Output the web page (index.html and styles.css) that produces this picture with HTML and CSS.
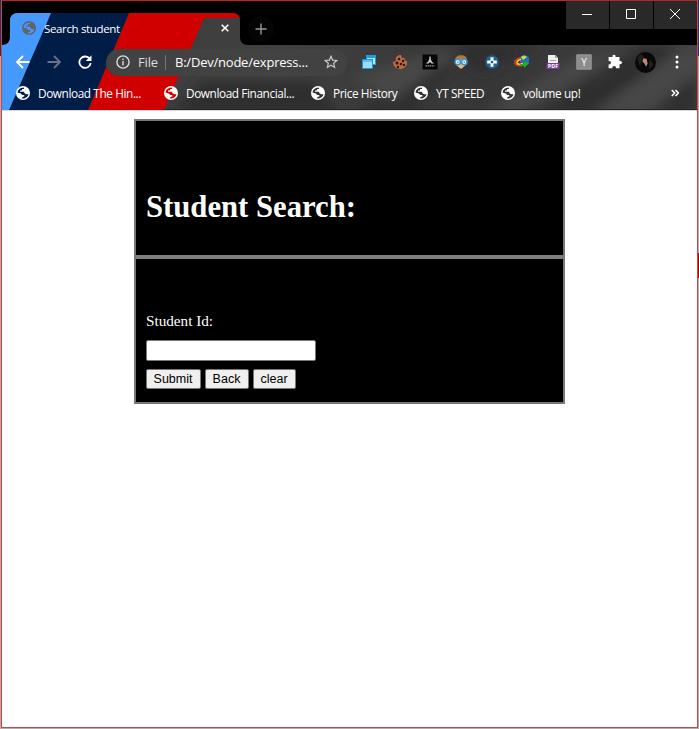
FILE: index.html
```html
<!DOCTYPE html>
<html lang="en">
<head>
<meta charset="utf-8">
<title>Search student</title>
<link rel="stylesheet" href="styles.css">
</head>
<body>
<svg class="defs" width="0" height="0" aria-hidden="true">
  <symbol id="globe" viewBox="0 0 14 14">
    <circle cx="7" cy="7" r="7" fill="currentColor"/>
    <path class="land" d="M7.7 1.5L8.2 3H6.2L5.8 4.5H4V5.8H7.8L8.8 7.6L10.6 8.2H12.5Q11.7 11.5 8 12.4L6.2 12.5V11.2L8.6 10.3L8.1 9H6.3L4.8 7.5L1.5 6.5Q2 2 7.7 1.5Z"/>
  </symbol>
</svg>
<div class="window">
  <header class="chrome">
    <svg class="theme" viewBox="0 0 695 109" width="695" height="109" aria-hidden="true">
      <defs>
        <clipPath id="frame"><path d="M0 44C5 44 8 41 8 36V20Q8 12 16 12H230Q238 12 238 20V36C238 41 241 44 246 44H695V109H0Z"/></clipPath>
        <linearGradient id="metal" x1="0" y1="0" x2="1" y2="0"><stop offset="0" stop-color="#3b3b3b"/><stop offset=".4" stop-color="#404040"/><stop offset=".7" stop-color="#363636"/><stop offset="1" stop-color="#424242"/></linearGradient>
        <filter id="soft"><feGaussianBlur stdDeviation="6"/></filter>
      </defs>
      <g clip-path="url(#frame)">
        <path fill="url(#metal)" d="M0 0H695V109H0Z"/>
        <g filter="url(#soft)">
          <path fill="#2e2e2e" d="M200 80H310L340 112H170ZM350 112L430 60H455L410 112ZM535 112L640 44H680L590 112ZM440 44H540L480 72ZM650 112L695 75V112Z"/>
          <path fill="#474747" d="M480 112L580 55H620L515 112ZM590 112L680 50H695V70L640 112ZM350 75L440 50H460L390 100Z"/>
        </g>
        <path fill="#d00000" d="M127 12H240V17H202L162 109H86Z"/>
        <path fill="#001d48" d="M49 12H127L86 109H7Z"/>
        <path fill="#4599ff" d="M0 12H49L7 109H0Z"/>
        <path fill="#242424" d="M162 108H695V109H162Z"/>
      </g>
    </svg>
    <div class="titlebar">
      <div class="tab">
        <svg class="globe dim"><use href="#globe"/></svg>
        <span class="tab-title">Search student</span>
        <svg class="tab-close" viewBox="0 0 8 8"><path d="M.7.7L7.3 7.3M7.3.7L.7 7.3"/></svg>
      </div>
      <div class="new-tab"><svg viewBox="0 0 12 12"><path d="M6 .5V11.5M.5 6H11.5"/></svg></div>
      <div class="controls">
        <div class="control"><svg viewBox="0 0 12 12"><path d="M1 6.5H11"/></svg></div>
        <div class="control"><svg viewBox="0 0 12 12"><path d="M1.5 1.5H10.5V10.5H1.5Z"/></svg></div>
        <div class="control"><svg viewBox="0 0 12 12"><path d="M1 1L11 11M11 1L1 11"/></svg></div>
      </div>
    </div>
    <div class="toolbar">
      <svg class="nav" viewBox="0 0 14 14"><path d="M13.5 7H1.5M7 1L1 7L7 13"/></svg>
      <svg class="nav faded" viewBox="0 0 14 14"><path d="M.5 7H12.5M7 1L13 7L7 13"/></svg>
      <svg class="nav" viewBox="0 0 14 14"><path d="M11.8 4A5.7 5.7 0 1 0 12.7 8.2"/><path class="solid" d="M13.5.3V6H7.8Z"/></svg>
      <div class="address">
        <svg class="info" viewBox="0 0 14 14"><circle cx="7" cy="7" r="6.1"/><path d="M7 6V10.5M7 3.4V4.9"/></svg>
        <span class="scheme">File</span>
        <span class="divider"></span>
        <span class="url">B:/Dev/node/express...</span>
        <svg class="star" viewBox="0 0 14 14"><path d="M7 1.3L8.6 5.1L12.8 5.5L9.7 8.3L10.6 12.4L7 10.3L3.4 12.4L4.3 8.3L1.2 5.5L5.4 5.1Z"/></svg>
      </div>
      <div class="extensions">
        <svg viewBox="0 0 16 16"><path fill="#1b9ce6" d="M5 1H15V11H5Z"/><path fill="#b8e6fc" d="M6 4H14V10H6Z"/><path fill="#1595df" d="M1 5H12V15H1Z"/><path fill="#9ddcfa" d="M2 8H11V14H2Z"/><path fill="#5cc0f5" d="M2 6H11V8H2Z"/></svg>
        <svg viewBox="0 0 16 16"><path fill="#b96b43" d="M9 1L10 4L13 4L12 6L15 7C16 12 12 15 8 15C4 15 1 12 1 8C2 7 4 8 4 6C3 3 6 1 9 1Z"/><g fill="#30150d"><circle cx="7" cy="5" r="1.3"/><circle cx="11" cy="7" r="1.2"/><circle cx="5" cy="9" r="1.5"/><circle cx="9" cy="10" r="1.3"/><circle cx="6" cy="13" r="1.2"/><circle cx="12" cy="11" r="1.2"/></g></svg>
        <svg viewBox="0 0 16 16"><path fill="#050505" d="M.5.5H15.5V15.5H.5Z"/><path fill="#ccc" d="M7.3 2.5H8.7V5L9.8 7.5L12 9.5H9.5L8 8L6.5 9.5H4L6.2 7.5L7.3 5Z"/><path stroke="#999" stroke-dasharray="1.5 .6" stroke-width="1.3" d="M3.5 11.8H12.5"/></svg>
        <svg viewBox="0 0 16 16"><path fill="#b77835" d="M3 11L2 5Q4 1 8 1.2Q13 1 14 5L13 11Q8 16 3 11Z"/><path fill="#f1b56f" d="M4 6L12 5V11L9 14.5H7L4 11Z"/><g fill="#e7f6ff" stroke="#3295da" stroke-width="1.5"><circle cx="4.7" cy="8" r="2.7"/><circle cx="11.3" cy="8" r="2.7"/></g><path fill="#2875ac" d="M4.2 7.4H5.5V8.8H4.2ZM10.6 7.4H11.9V8.8H10.6Z"/></svg>
        <svg viewBox="0 0 16 16"><circle cx="8" cy="8" r="6.8" fill="#1c618f"/><path fill="#fff" d="M6.5 3.2H9.5V6.5H12.8V9.5H9.5V12.8H6.5V9.5H3.2V6.5H6.5Z"/><path fill="#1c618f" d="M6.8 6.8H9.2V9.2H6.8Z"/></svg>
        <svg viewBox="0 0 16 16"><circle cx="10.5" cy="6" r="4.8" fill="#2470bb"/><path fill="#c3dc58" d="M7 3Q10 0 13 3L9 6Z"/><g fill="none" stroke-width="1.7"><path stroke="#d63c23" d="M7 3.5Q-1 6 1.5 10Q4.5 13 9 11"/><path stroke="#ffc629" d="M7 5.2Q2 7 3.3 9.5Q5 11 9 9.5"/></g><path fill="#18b61b" d="M7 10H10V7.5L15.5 9L10 14V12L5 11Z"/></svg>
        <svg viewBox="0 0 16 16"><path fill="#eee" d="M3 1H10L13 4V10H3Z"/><path fill="#aaa" d="M10 1V4H13Z"/><path stroke="#aaa" d="M5 6.5H11"/><path fill="#7b3b9a" d="M1.5 9H14.5V15H1.5Z"/><text x="8" y="14.2" class="pdf">PDF</text></svg>
        <svg viewBox="0 0 16 16"><path fill="#8c8c8c" stroke="#9b9b9b" d="M.8.8H15.2V15.2H.8Z"/><text x="8" y="11.8" class="letter">Y</text></svg>
        <svg viewBox="0 0 16 16"><path fill="#fff" d="M2 3H5.5Q5 .8 7 .8Q9 .8 8.5 3H12.5V7Q15 6.5 15 8.6Q15 10.6 12.5 10.2V14.3H9Q9.3 12 7.2 12Q5 12 5.5 14.3H1.6V10.5Q4 10.7 4 8.6Q4 6.7 1.6 7V3Z"/></svg>
      </div>
      <svg class="avatar" viewBox="0 0 20 20"><circle cx="10" cy="10" r="10" fill="#090909"/><path fill="#241e1c" d="M2 6Q6 0 8 4L5 14ZM14 7L18 12L13 17Z"/><path fill="#b98b78" d="M8 6L11 6.5L12 11L10.5 14L9 11L7 9Z"/></svg>
      <svg class="menu" viewBox="0 0 4 14"><circle cx="2" cy="2" r="1.5"/><circle cx="2" cy="7" r="1.5"/><circle cx="2" cy="12" r="1.5"/></svg>
    </div>
    <nav class="bookmarks">
      <div class="bookmark hindu"><svg class="globe navy"><use href="#globe"/></svg><span>Download The Hin...</span></div>
      <div class="bookmark financial"><svg class="globe red"><use href="#globe"/></svg><span>Download Financial...</span></div>
      <div class="bookmark price"><svg class="globe"><use href="#globe"/></svg><span>Price History</span></div>
      <div class="bookmark speed"><svg class="globe"><use href="#globe"/></svg><span>YT SPEED</span></div>
      <div class="bookmark volume"><svg class="globe"><use href="#globe"/></svg><span>volume up!</span></div>
      <svg class="more" viewBox="0 0 8 8"><path d="M.8 1L3.6 4L.8 7M4.5 1L7.3 4L4.5 7"/></svg>
    </nav>
  </header>
  <main class="page">
    <section class="card">
      <div class="heading"><h1>Student Search:</h1></div>
      <form class="form">
        <label for="student">Student Id:</label>
        <input id="student" type="text">
        <div class="buttons"><button class="submit" type="button">Submit</button><button class="back" type="button">Back</button><button class="clear" type="reset">clear</button></div>
      </form>
    </section>
  </main>
</div>
</body>
</html>
```
FILE: styles.css
```css
* { box-sizing: border-box; }
body { margin: 0; height: 729px; padding: 0 1px 1px; overflow: hidden; background: linear-gradient(#b10000, #b10000) right 253px / 2px 25px no-repeat, linear-gradient(#243465 0 56px, #b8aaa8 56px); }
svg { display: block; flex: none; }
.defs { position: absolute; }
.window { width: 697px; height: 728px; border: 1px solid #c84549; border-top-color: #be2226; background: #fff; }
.chrome { position: relative; height: 110px; background: #000; color: #fff; font: 12px "Open Sans", "Noto Sans", sans-serif; border-bottom: 1px solid #d8d8d8; }
.theme { position: absolute; inset: 0; }
.titlebar, .toolbar, .bookmarks { position: relative; display: flex; }
.titlebar { height: 44px; }
.tab { display: flex; align-items: center; width: 230px; height: 32px; margin: 11px 0 0 8px; padding: 0 11px 0 12px; }
.globe { --land: #333; width: 14px; height: 14px; color: #fff; }
.land { fill: var(--land); }
.dim { color: #626467; --land: #4599ff; }
.navy { --land: #001d48; }
.red { --land: #d00000; }
.tab-title { margin-left: 8px; font-size: 11.5px; letter-spacing: -.35px; white-space: nowrap; }
.tab-close { width: 8px; height: 8px; margin-left: auto; fill: none; stroke: #fff; stroke-width: 1.6; }
.new-tab { display: grid; place-items: center; width: 26px; height: 26px; margin: 15px 0 0 8px; border-radius: 50%; background: #050505; }
.new-tab svg { width: 12px; height: 12px; fill: none; stroke: #999; stroke-width: 1.4; }
.controls { display: flex; gap: 1px; height: 28px; margin-left: auto; }
.control { display: grid; place-items: center; width: 43px; background: #292929; }
.control svg { width: 12px; height: 12px; margin: -2px 0 0 -2px; fill: none; stroke: #fff; stroke-width: 1; }
.toolbar { height: 35px; align-items: center; padding: 0 0 1px 14px; }
.nav { width: 14px; height: 14px; margin-right: 17px; fill: none; stroke: #fff; stroke-width: 1.8; }
.faded { stroke: #667187; }
.solid { fill: #fff; stroke: none; }
.address { display: flex; align-items: center; width: 241px; height: 27px; margin-left: -3px; padding-left: 10px; border-radius: 14px; background: #424242; font-size: 13px; }
.info { width: 14px; height: 14px; fill: none; stroke: #ddd; stroke-width: 1.4; }
.scheme { width: 21px; margin-left: 8px; color: #ddd; letter-spacing: -.15px; white-space: nowrap; }
.divider { width: 1px; height: 15px; margin: 0 9px 0 6px; background: #777; }
.url { width: 134px; white-space: nowrap; letter-spacing: -.22px; }
.star { width: 14px; height: 14px; margin-left: 15px; fill: none; stroke: #ccc; stroke-width: 1.2; }
.extensions { display: flex; gap: 14.7px; margin-left: 14px; }
.extensions svg { width: 16px; height: 16px; }
.extensions text { text-anchor: middle; fill: #fff; font-family: "Open Sans", sans-serif; }
.pdf { font-size: 5.5px; font-weight: bold; }
.letter { font-size: 10px; }
.avatar { width: 21px; height: 21px; margin-left: 12px; }
.menu { width: 4px; height: 14px; margin-left: 19px; fill: #fff; }
.bookmarks { height: 30px; align-items: center; padding: 0 18px 4px 14px; white-space: nowrap; }
.bookmark { display: flex; align-items: center; gap: 8px; font-size: 11.8px; letter-spacing: -.4px; }
.hindu { width: 148px; }
.financial { width: 147px; }
.price { width: 103px; }
.speed { width: 87px; }
.more { width: 8px; height: 8px; margin-left: auto; fill: none; stroke: #fff; stroke-width: 1.6; }
.page { display: flex; justify-content: center; padding: 8px 0 0; font: 15.2px "Liberation Serif", serif; }
.card { width: 431px; height: 285px; border: 2px solid #777; background: #000; color: #fff; }
.heading { height: 138px; padding: 68px 10px 0; border-bottom: 4px solid #808080; }
h1 { margin: 0; font-size: 30.7px; line-height: 36px; }
.form { display: flex; flex-direction: column; align-items: flex-start; padding: 53px 10px 0; }
label { line-height: 18px; }
input { width: 170px; height: 21px; margin: 10px 0 8px; padding: 1px; border: 1px solid #777; border-radius: 2px; background: #fff; }
.buttons { display: flex; gap: 4px; margin-left: -.5px; }
button { height: 20px; padding: 0; border: 1px solid #777; border-radius: 2px; background: #efefef; color: #000; font: 12.5px "Liberation Sans", sans-serif; }
.submit { width: 55px; }
.back { width: 44px; }
.clear { width: 43px; }
```
